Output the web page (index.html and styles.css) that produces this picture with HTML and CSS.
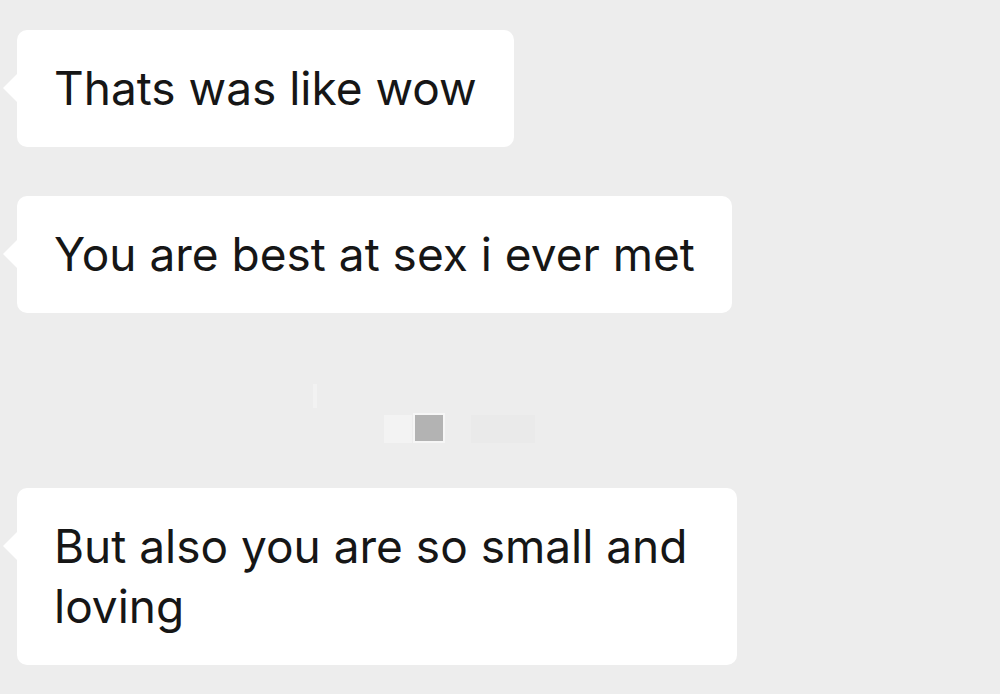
FILE: index.html
```html
<!DOCTYPE html>
<html lang="en">
<head>
  <meta charset="utf-8">
  <title>Chat</title>
  <link rel="stylesheet" href="styles.css">
</head>
<body>
  <div class="chat">
    <div class="burbuja">Thats was like wow</div>
    <div class="burbuja">You are best at sex i ever met</div>

    <div class="borroso">
      <span class="raya"></span>
      <span class="mancha m1"></span>
      <span class="cuadro"></span>
      <span class="mancha m2"></span>
    </div>

    <div class="burbuja">But also you are so small and loving</div>
  </div>
</body>
</html>
```

FILE: styles.css
```css
body {
    margin: 0;
    background-color: #ededed;
    font-family: Inter, "Liberation Sans", sans-serif;
}

.chat {
    display: flex;
    flex-direction: column;
    align-items: flex-start;
    gap: 49px;
    padding: 30px 0 0 17px;
}

.burbuja {
    position: relative;
    max-width: 720px;
    box-sizing: border-box;
    padding: 28px 37px 29px 37px;
    background-color: #ffffff;
    border-radius: 10px;
    color: #161616;
    font-size: 46px;
    line-height: 60px;
}

/* la colita de la burbuja */
.burbuja::before {
    content: "";
    position: absolute;
    left: -14px;
    top: 44px;
    border-top: 14px solid transparent;
    border-bottom: 14px solid transparent;
    border-right: 14px solid #ffffff;
}

.borroso {
    position: relative;
    align-self: stretch;
    height: 77px;
}

.raya {
    position: absolute;
    left: 296px;
    top: 22px;
    width: 4px;
    height: 24px;
    background-color: #f2f2f2;
}

.mancha {
    position: absolute;
    top: 53px;
    height: 28px;
    background-color: #f3f3f3;
}

.m1 {
    left: 367px;
    width: 28px;
}

.m2 {
    left: 454px;
    width: 64px;
    background-color: #eaeaea;
}

.cuadro {
    position: absolute;
    left: 398px;
    top: 53px;
    width: 28px;
    height: 26px;
    background-color: #b3b3b3;
    box-shadow: 0 0 0 2px #f6f6f6;
}
```
